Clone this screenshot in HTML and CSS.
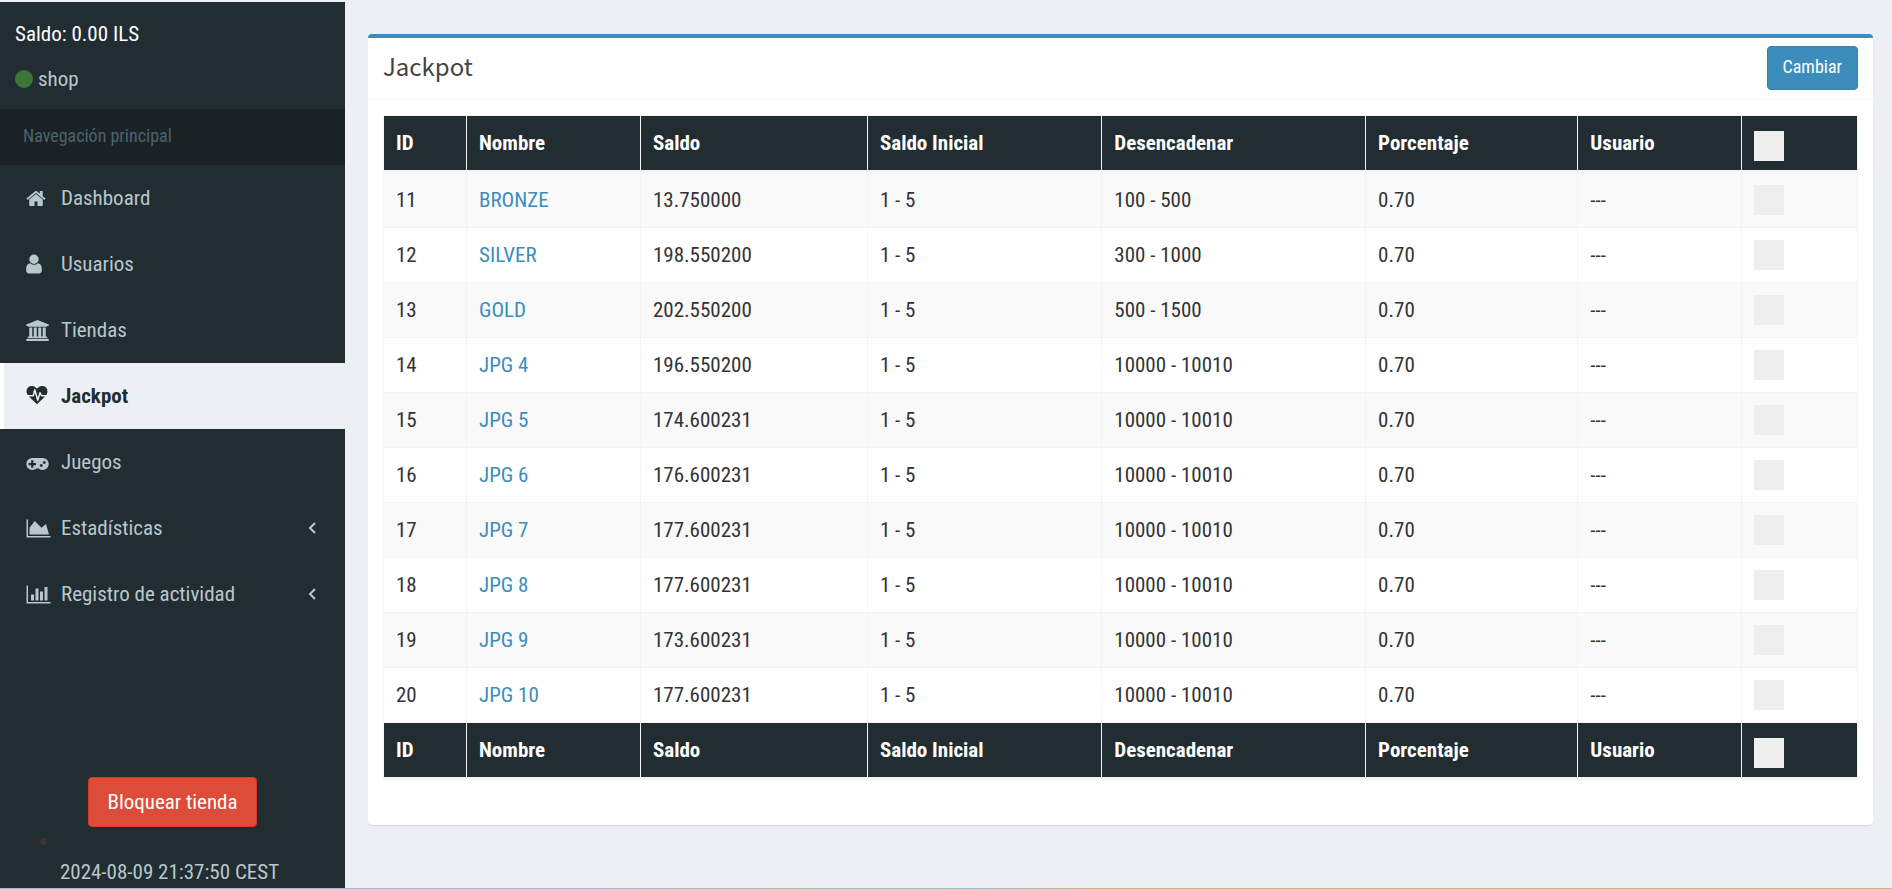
FILE: index.html
```html
<!DOCTYPE html>
<html lang="es">
<head>
<meta charset="utf-8">
<meta name="viewport" content="width=device-width, initial-scale=1">
<title>Jackpot</title>
<link rel="stylesheet" href="styles.css">
</head>
<body>
<div class="layout">
  <aside class="sidebar">
    <div class="account">
      <p class="balance">Saldo: 0.00 ILS</p>
      <p class="user"><span class="status"></span><a href="#">shop</a></p>
    </div>
    <nav class="nav" aria-labelledby="nav-title">
      <h2 class="nav-title" id="nav-title">Navegación principal</h2>
      <ul class="menu">
        <li><a class="item" href="#"><span class="icon"><svg width="20" height="21" viewBox="64 0 1664 1792"><path d="M1472 992v480q0 26-19 45t-45 19h-384v-384h-256v384h-384q-26 0-45-19t-19-45v-480q0-1 .5-3t.5-3l575-474 575 474q1 2 1 6zm223-69l-62 74q-8 9-21 11h-3q-13 0-21-7l-692-577-692 577q-12 8-24 7-13-2-21-11l-62-74q-8-10-7-23.5t11-21.5l719-599q32-26 76-26t76 26l244 204v-195q0-14 9-23t23-9h192q14 0 23 9t9 23v408l219 182q10 8 11 21.5t-7 23.5z"/></svg></span>Dashboard</a></li>
        <li><a class="item" href="#"><span class="icon"><svg width="16" height="22" viewBox="256 0 1280 1792"><path d="M1536 1399q0 109-62.5 187t-150.5 78h-854q-88 0-150.5-78t-62.5-187q0-85 8.5-160.5t31.5-152 58.5-131 94-89 134.5-34.5q131 128 313 128t313-128q76 0 134.5 34.5t94 89 58.5 131 31.5 152 8.5 160.5zm-256-887q0 159-112.5 271.5t-271.5 112.5-271.5-112.5-112.5-271.5 112.5-271.5 271.5-112.5 271.5 112.5 112.5 271.5z"/></svg></span>Usuarios</a></li>
        <li><a class="item" href="#"><span class="icon"><svg width="23" height="21" viewBox="0 0 1920 1792"><path d="M960 0l960 384v128h-128q0 26-20.500 45t-48.500 19h-1526q-28 0-48.500-19t-20.500-45h-128v-128zm-704 640h256v768h128v-768h256v768h128v-768h256v768h128v-768h256v768h59q28 0 48.500 19t20.500 45v64h-1664v-64q0-26 20.500-45t48.500-19h59v-768zm1595 960q28 0 48.500 19t20.500 45v128h-1920v-128q0-26 20.500-45t48.500-19h1782z"/></svg></span>Tiendas</a></li>
        <li><a class="item active" href="#" aria-current="page"><span class="icon"><svg width="22" height="21" viewBox="0 0 1792 1792"><path d="M1280 896h305q-5 6-10 10.500t-9 7.500l-3 4-623 600q-18 18-44 18t-44-18l-624-602q-5-2-21-20h369q22 0 39.500-13.500t22.500-34.500l70-281 190 667q6 20 23 33t39 13q21 0 38-13t23-33l146-485 56 112q18 35 57 35zm512-428q0 145-103 300h-369l-111-221q-8-17-25.500-27t-36.500-8q-45 5-56 46l-129 430-196-686q-6-20-23.500-33t-39.500-13-39 13.500-22 34.500l-116 464h-423q-103-155-103-300 0-220 127-344t351-124q62 0 126.500 21.500t120 58 95.500 68.500 76 68q36-36 76-68t95.500-68.500 120-58 126.500-21.500q224 0 351 124t127 344z"/></svg></span>Jackpot</a></li>
        <li><a class="item" href="#"><span class="icon"><svg width="23" height="21" viewBox="0 0 1920 1792"><path d="M832 1088v-128q0-14-9-23t-23-9h-192v-192q0-14-9-23t-23-9h-128q-14 0-23 9t-9 23v192h-192q-14 0-23 9t-9 23v128q0 14 9 23t23 9h192v192q0 14 9 23t23 9h128q14 0 23-9t9-23v-192h192q14 0 23-9t9-23zm576 64q0-53-37.500-90.500t-90.500-37.500-90.500 37.500-37.500 90.500 37.500 90.500 90.500 37.500 90.500-37.500 37.500-90.500zm256-256q0-53-37.500-90.500t-90.500-37.500-90.500 37.500-37.500 90.500 37.500 90.500 90.500 37.500 90.500-37.500 37.500-90.500zm256 128q0 212-150 362t-362 150q-192 0-338-128h-220q-146 128-338 128-212 0-362-150t-150-362 150-362 362-150h896q212 0 362 150t150 362z"/></svg></span>Juegos</a></li>
        <li><a class="item" href="#"><span class="icon"><svg width="25" height="21" viewBox="0 0 2048 1792"><path d="M2048 1536v128h-2048v-1536h128v1408h1920zm-384-1024l256 896h-1664v-576l448-576 576 576z"/></svg></span>Estadísticas<svg class="chevron" width="8" height="14" viewBox="0 0 8 14"><path d="M7 2L2 7l5 5"/></svg></a></li>
        <li><a class="item" href="#"><span class="icon"><svg width="25" height="21" viewBox="0 0 2048 1792"><path d="M640 896v512h-256v-512h256zm384-512v1024h-256v-1024h256zm1024 1152v128h-2048v-1536h128v1408h1920zm-640-896v768h-256v-768h256zm384-384v1152h-256v-1152h256z"/></svg></span>Registro de actividad<svg class="chevron" width="8" height="14" viewBox="0 0 8 14"><path d="M7 2L2 7l5 5"/></svg></a></li>
      </ul>
    </nav>
    <div class="sidebar-foot">
      <button class="btn btn-danger" type="button">Bloquear tienda</button>
      <span class="dot"></span>
      <time class="clock">2024-08-09 21:37:50 CEST</time>
    </div>
  </aside>
  <main class="content">
    <section class="box">
      <header class="box-header">
        <h1 class="box-title">Jackpot</h1>
        <button class="btn btn-primary" type="submit" form="jackpots">Cambiar</button>
      </header>
      <form class="box-body" id="jackpots">
        <table class="table">
          <colgroup><col class="c-id"><col class="c-name"><col class="c-balance"><col class="c-start"><col class="c-trigger"><col class="c-percent"><col class="c-user"><col class="c-check"></colgroup>
          <thead><tr><th>ID</th><th>Nombre</th><th>Saldo</th><th>Saldo Inicial</th><th>Desencadenar</th><th>Porcentaje</th><th>Usuario</th><th class="check-head"><input class="check" type="checkbox" aria-label="Seleccionar todo"></th></tr></thead>
          <tbody>
            <tr><td>11</td><td><a href="#">BRONZE</a></td><td>13.750000</td><td>1 - 5</td><td>100 - 500</td><td>0.70</td><td>---</td><td><input class="check" type="checkbox" aria-label="BRONZE"></td></tr>
            <tr><td>12</td><td><a href="#">SILVER</a></td><td>198.550200</td><td>1 - 5</td><td>300 - 1000</td><td>0.70</td><td>---</td><td><input class="check" type="checkbox" aria-label="SILVER"></td></tr>
            <tr><td>13</td><td><a href="#">GOLD</a></td><td>202.550200</td><td>1 - 5</td><td>500 - 1500</td><td>0.70</td><td>---</td><td><input class="check" type="checkbox" aria-label="GOLD"></td></tr>
            <tr><td>14</td><td><a href="#">JPG 4</a></td><td>196.550200</td><td>1 - 5</td><td>10000 - 10010</td><td>0.70</td><td>---</td><td><input class="check" type="checkbox" aria-label="JPG 4"></td></tr>
            <tr><td>15</td><td><a href="#">JPG 5</a></td><td>174.600231</td><td>1 - 5</td><td>10000 - 10010</td><td>0.70</td><td>---</td><td><input class="check" type="checkbox" aria-label="JPG 5"></td></tr>
            <tr><td>16</td><td><a href="#">JPG 6</a></td><td>176.600231</td><td>1 - 5</td><td>10000 - 10010</td><td>0.70</td><td>---</td><td><input class="check" type="checkbox" aria-label="JPG 6"></td></tr>
            <tr><td>17</td><td><a href="#">JPG 7</a></td><td>177.600231</td><td>1 - 5</td><td>10000 - 10010</td><td>0.70</td><td>---</td><td><input class="check" type="checkbox" aria-label="JPG 7"></td></tr>
            <tr><td>18</td><td><a href="#">JPG 8</a></td><td>177.600231</td><td>1 - 5</td><td>10000 - 10010</td><td>0.70</td><td>---</td><td><input class="check" type="checkbox" aria-label="JPG 8"></td></tr>
            <tr><td>19</td><td><a href="#">JPG 9</a></td><td>173.600231</td><td>1 - 5</td><td>10000 - 10010</td><td>0.70</td><td>---</td><td><input class="check" type="checkbox" aria-label="JPG 9"></td></tr>
            <tr><td>20</td><td><a href="#">JPG 10</a></td><td>177.600231</td><td>1 - 5</td><td>10000 - 10010</td><td>0.70</td><td>---</td><td><input class="check" type="checkbox" aria-label="JPG 10"></td></tr>
          </tbody>
          <tfoot><tr><th>ID</th><th>Nombre</th><th>Saldo</th><th>Saldo Inicial</th><th>Desencadenar</th><th>Porcentaje</th><th>Usuario</th><th class="check-head"><input class="check" type="checkbox" aria-label="Seleccionar todo"></th></tr></tfoot>
        </table>
      </form>
    </section>
  </main>
</div>
</body>
</html>
```

FILE: styles.css
```css
* { box-sizing: border-box; }

body {
  margin: 0;
  background: #ecf0f5;
  color: #333;
  font: 400 21px/30px "Roboto Condensed", Roboto, sans-serif;
}

a { color: #3c8dbc; text-decoration: none; }
p, h1, h2, ul { margin: 0; padding: 0; }

.layout {
  display: flex;
  min-height: 100vh;
  border-top: 2px solid #ecf0f5;
  border-bottom: 1px solid;
  border-image: linear-gradient(90deg, #a9b4c4 0%, #a9b4c4 32%, #a3c0a8 42%, #9fc0c0 52%, #c8b68e 58%, #c8b68e 100%) 1;
  border-image-width: 0 0 1px;
}

.sidebar {
  flex: none;
  display: flex;
  flex-direction: column;
  width: 345px;
  background: #222d32;
  color: #b8c7ce;
}

.account { padding: 17px 15px 15px; }
.balance { color: #fff; margin-bottom: 15px; }
.user { display: flex; align-items: center; gap: 5px; }
.user a { color: #b8c7ce; }
.status { width: 18px; height: 18px; border-radius: 50%; background: #3c763d; }

.nav-title {
  padding: 12px 23px 14px;
  background: #1a2226;
  color: #4b646f;
  font-size: 18px;
  font-weight: 400;
  line-height: 30px;
}

.menu { list-style: none; }
.item {
  display: flex;
  align-items: center;
  height: 66px;
  padding: 0 29px 0 22px;
  border-left: 4px solid transparent;
  color: #b8c7ce;
}
.item.active {
  border-left-color: #fff;
  background: #ecf0f5;
  color: #222d32;
  font-weight: 700;
}
.icon { display: flex; width: 35px; }
.icon svg { fill: currentColor; }
.chevron {
  margin-left: auto;
  fill: none;
  stroke: currentColor;
  stroke-width: 2;
}

.sidebar-foot {
  position: relative;
  display: flex;
  flex-direction: column;
  align-items: center;
  gap: 30px;
  margin-top: auto;
  padding-bottom: 1px;
}
.dot {
  position: absolute;
  left: 40px;
  top: 61px;
  width: 7px;
  height: 7px;
  border-radius: 50%;
  background: #3a3336;
}
.clock { padding-right: 6px; }

.btn {
  border: 1px solid;
  border-radius: 4px;
  color: #fff;
  font-family: inherit;
  cursor: pointer;
}
.btn-danger {
  padding: 9px 18px;
  border-color: #d73925;
  background: #dd4b39;
  font-size: 21px;
  line-height: 30px;
}
.btn-primary {
  padding: 6px 15px 8px;
  border-color: #367fa9;
  background: #3c8dbc;
  font-size: 18px;
  line-height: 28px;
}

.content { flex: 1; min-width: 0; padding: 32px 19px 40px 23px; }

.box {
  border-top: 4px solid #3c8dbc;
  border-radius: 4px;
  background: #fff;
  box-shadow: 0 1px 1px rgba(0, 0, 0, 0.1);
}
.box-header {
  display: flex;
  justify-content: space-between;
  align-items: flex-start;
  padding: 8px 15px 9px;
  border-bottom: 1px solid #f4f4f4;
}
.box-title {
  padding-top: 8px;
  color: #444;
  font: 400 24px/24px "Noto Sans CJK SC", "Noto Sans", sans-serif;
}
.box-body { padding: 15px 15px 45px; }

.table {
  width: 100%;
  table-layout: fixed;
  border-collapse: separate;
  border-spacing: 0;
  border-top: 1px solid #f4f4f4;
  border-left: 1px solid #f4f4f4;
}
.table th, .table td {
  padding: 12px;
  border-right: 1px solid #f4f4f4;
  border-bottom: 1px solid #f4f4f4;
  text-align: left;
}
.table th {
  border-bottom-width: 3px;
  background: #222d32;
  background-clip: padding-box;
  color: #fff;
  font-weight: 700;
}
.table .check-head { padding-top: 15px; padding-bottom: 9px; }
.table tbody tr:nth-child(odd) { background: #f9f9f9; }

.c-id { width: 83px; }
.c-name { width: 11.8%; }
.c-balance { width: 15.4%; }
.c-start { width: 15.9%; }
.c-trigger { width: 17.9%; }
.c-percent { width: 14.4%; }
.c-user { width: 11.1%; }

.check {
  appearance: none;
  display: block;
  width: 30px;
  height: 30px;
  margin: 0;
  background: #eee;
}
.check:checked { background: #3c8dbc; }
```
